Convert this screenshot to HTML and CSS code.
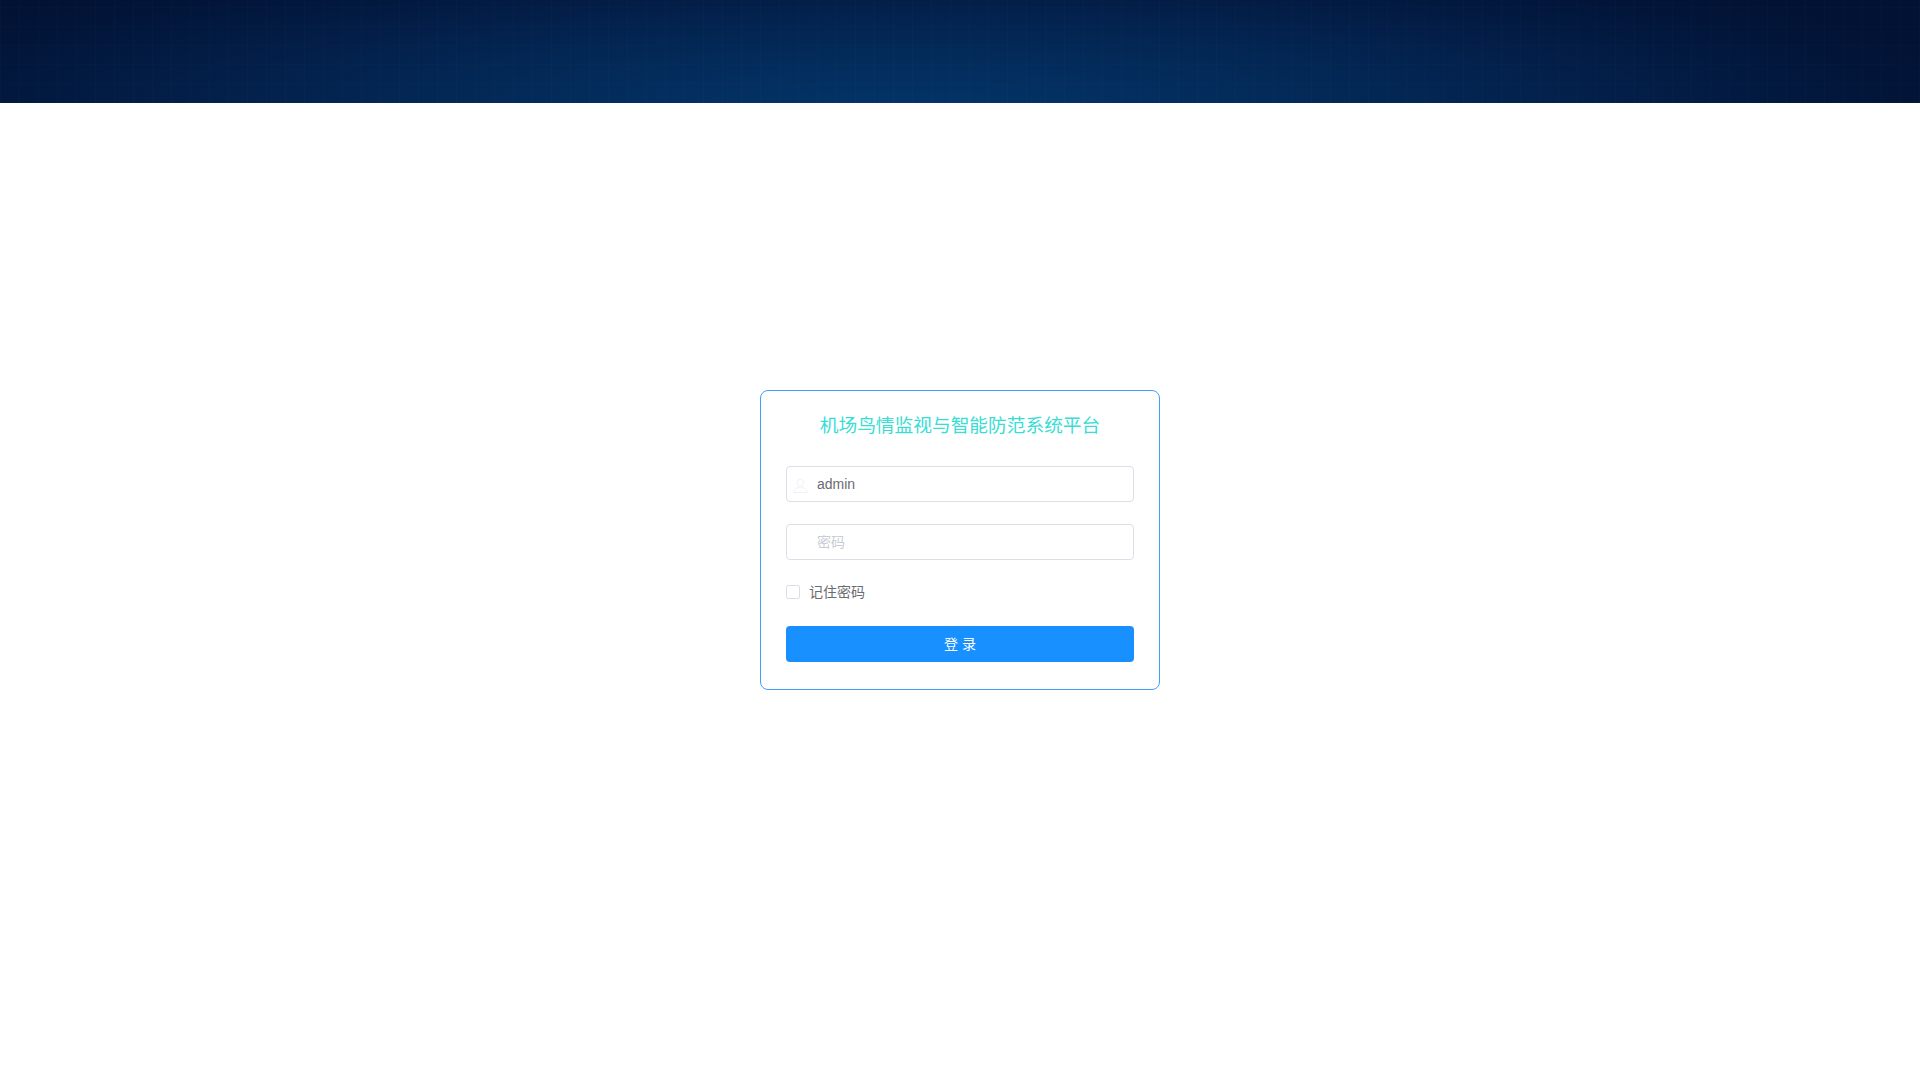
FILE: index.html
```html
<!DOCTYPE html>
<html lang="zh-CN">
<head>
<meta charset="utf-8">
<title>机场鸟情监视与智能防范系统平台</title>
<link rel="stylesheet" href="styles.css">
</head>
<body>
<header class="banner"></header>
<main class="stage">
  <form class="card">
    <h3 class="title">机场鸟情监视与智能防范系统平台</h3>
    <div class="field">
      <svg class="field-icon" viewBox="0 0 16 16" fill="none" stroke="#eef0f3" stroke-width="1">
        <circle cx="8" cy="5" r="3.6"/>
        <path d="M1 15.5c0-3.6 3-5.6 7-5.6s7 2 7 5.6z"/>
      </svg>
      <input class="input" type="text" value="admin">
    </div>
    <div class="field">
      <input class="input" type="password" placeholder="密码">
    </div>
    <label class="remember">
      <span class="checkbox"></span>
      <span class="remember-text">记住密码</span>
    </label>
    <button class="submit" type="button">登 录</button>
  </form>
</main>
</body>
</html>
```

FILE: styles.css
```css
* {
  box-sizing: border-box;
}

html,
body {
  height: 100%;
  margin: 0;
}

body {
  display: flex;
  flex-direction: column;
  overflow: hidden;
  background: #fff;
  font-family: "Liberation Sans", "Noto Sans CJK SC", sans-serif;
  color: #6a6c71;
}

.banner {
  flex: 0 0 103px;
  background-color: #021234;
  background-image:
    repeating-linear-gradient(90deg, rgba(120, 170, 220, 0.025) 0 1px, transparent 1px 19px),
    repeating-linear-gradient(0deg, rgba(120, 170, 220, 0.015) 0 1px, transparent 1px 19px),
    radial-gradient(ellipse 58% 170% at 47% 112%, #03356a 0%, #032b5a 34%, #03214c 60%, #02173c 84%, #021234 100%);
}

.stage {
  flex: 1;
  display: flex;
  align-items: center;
  justify-content: center;
  padding-bottom: 103px;
}

.card {
  width: 400px;
  height: 300px;
  padding: 0 25px;
  border: 1px solid #409eff;
  border-radius: 8px;
  background: #fff;
}

.title {
  margin: 23px 0 28px;
  color: #38ddd4;
  font-size: 18.72px;
  font-weight: 400;
  line-height: 24px;
  text-align: center;
}

.field {
  position: relative;
  height: 36px;
  margin-bottom: 22px;
}

.field-icon {
  position: absolute;
  left: 7px;
  top: 12px;
  width: 15px;
  height: 15px;
}

.input {
  display: block;
  width: 100%;
  height: 36px;
  padding: 0 15px 0 30px;
  border: 1px solid #dcdfe6;
  border-radius: 4px;
  outline: none;
  background: transparent;
  color: #6a6c71;
  font: 14px "Liberation Sans", "Noto Sans CJK SC", sans-serif;
}

.input::placeholder {
  color: #c8ccd3;
  opacity: 1;
}

.remember {
  display: flex;
  align-items: center;
  height: 20px;
  margin-bottom: 24px;
  font-size: 14px;
}

.checkbox {
  width: 14px;
  height: 14px;
  margin-right: 9px;
  border: 1px solid #dcdfe6;
  border-radius: 2px;
  background: #fff;
}

.remember-text {
  margin-bottom: 2px;
}

.submit {
  display: block;
  width: 100%;
  height: 36px;
  padding: 0 0 2px;
  border: 0;
  border-radius: 4px;
  background: #1890ff;
  color: #fff;
  font: 14px "Liberation Sans", "Noto Sans CJK SC", sans-serif;
}
```
